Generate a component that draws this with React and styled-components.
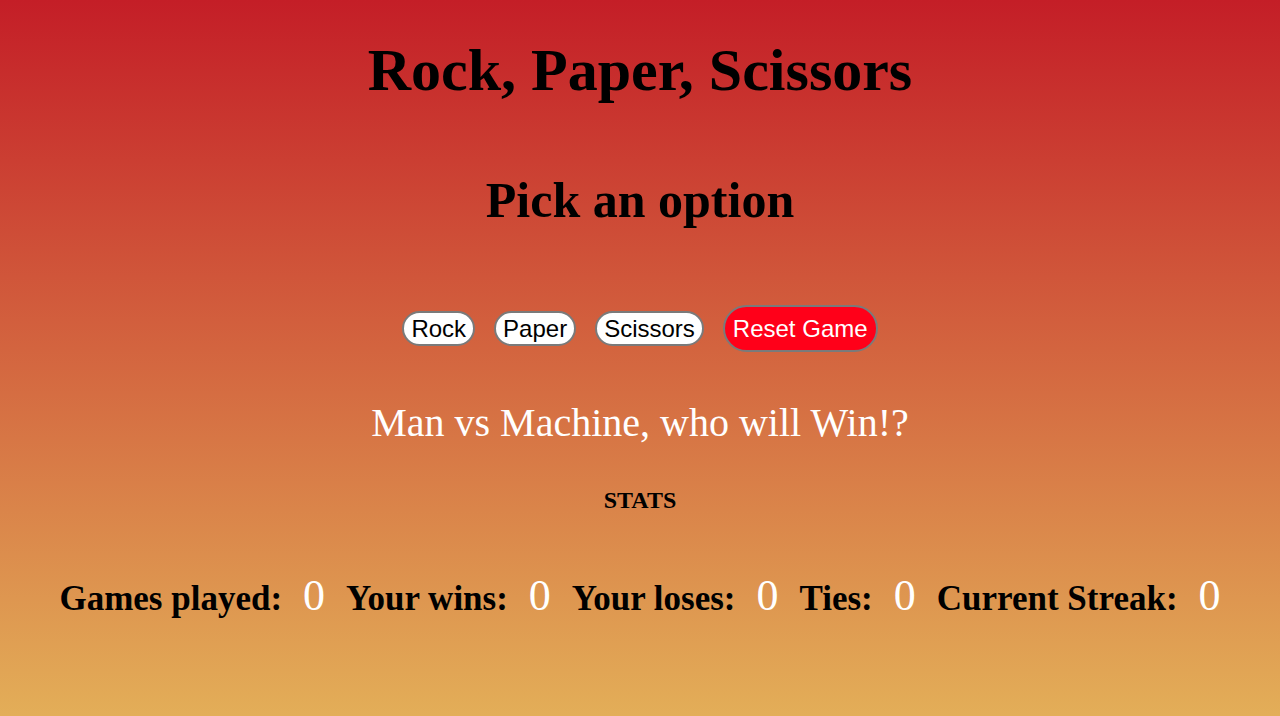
import styled, { createGlobalStyle } from 'styled-components';
import { useState } from 'react';

const GlobalStyle = createGlobalStyle`
  html, body {
    margin: 0;
    padding: 0;
  }
  body {
    font-family: "Liberation Serif", "Times New Roman", serif;
    background: linear-gradient(to bottom, #c41e27 0%, #e3ae58 100%);
    background-attachment: fixed;
    min-height: 100vh;
  }
`;

const OPTIONS = ['Rock', 'Paper', 'Scissors'];

function App() {
  const [stats, setStats] = useState({ played: 0, wins: 0, loses: 0, ties: 0, streak: 0, best: 0 });
  const [message, setMessage] = useState('Man vs Machine, who will Win!?');

  const play = (pick) => {
    const cpu = OPTIONS[Math.floor(Math.random() * 3)];
    const a = OPTIONS.indexOf(pick);
    const b = OPTIONS.indexOf(cpu);
    const next = { ...stats, played: stats.played + 1 };
    if (a === b) {
      next.ties += 1;
      setMessage(`Tie! Both picked ${pick}`);
    } else if ((a + 1) % 3 === b) {
      next.loses += 1;
      next.streak = 0;
      setMessage(`${cpu} beats ${pick}. You lose!`);
    } else {
      next.wins += 1;
      next.streak += 1;
      next.best = Math.max(next.best, next.streak);
      setMessage(`${pick} beats ${cpu}. You win!`);
    }
    setStats(next);
  };

  const reset = () => {
    setStats({ played: 0, wins: 0, loses: 0, ties: 0, streak: 0, best: 0 });
    setMessage('Man vs Machine, who will Win!?');
  };

  const rate = stats.played ? Math.round((stats.wins / stats.played) * 100) : 0;

  return (
    <Page>
      <GlobalStyle />
      <Title>Rock, Paper, Scissors</Title>
      <SubTitle>Pick an option</SubTitle>
      <ButtonRow>
        {OPTIONS.map((o) => (
          <PickButton key={o} onClick={() => play(o)}>{o}</PickButton>
        ))}
        <ResetButton onClick={reset}>Reset Game</ResetButton>
      </ButtonRow>
      <Message>{message}</Message>
      <StatsHeading>STATS</StatsHeading>
      <StatsRow>
        <Stat><Label>Games played:</Label><Value>{stats.played}</Value></Stat>
        <Stat><Label>Your wins:</Label><Value>{stats.wins}</Value></Stat>
        <Stat><Label>Your loses:</Label><Value>{stats.loses}</Value></Stat>
        <Stat><Label>Ties:</Label><Value>{stats.ties}</Value></Stat>
        <Stat><Label>Current Streak:</Label><Value>{stats.streak}</Value></Stat>
      </StatsRow>
      <StatsRow>
        <Stat><Label>Best Streak:</Label><Value>{stats.best}</Value></Stat>
        <Stat><Label>Win Rate:</Label><Value>{rate}%</Value></Stat>
      </StatsRow>
    </Page>
  );
}

export default App;

const Page = styled.div`
  display: flex;
  flex-direction: column;
  align-items: center;
  padding-top: 35px;
  padding-bottom: 40px;
`;

const Title = styled.h1`
  margin: 0;
  font-size: 60px;
  font-weight: bold;
  line-height: 70px;
  color: #000;
`;

const SubTitle = styled.h2`
  margin: 66px 0 0;
  font-size: 50px;
  font-weight: bold;
  line-height: 58px;
  color: #000;
`;

const ButtonRow = styled.div`
  display: flex;
  align-items: center;
  gap: 19px;
  margin-top: 76px;
`;

const PickButton = styled.button`
  font-family: "Liberation Sans", Arial, sans-serif;
  font-size: 24px;
  line-height: 27px;
  padding: 2px 7px;
  background: #fff;
  color: #000;
  border: 2px solid #7a7a7a;
  border-radius: 20px;
  cursor: pointer;
`;

const ResetButton = styled(PickButton)`
  padding: 8px 8px;
  background: #ff0019;
  color: #fff;
  border-radius: 26px;
`;

const Message = styled.p`
  margin: 48px 0 0;
  font-size: 40px;
  line-height: 46px;
  color: #fff;
`;

const StatsHeading = styled.h4`
  margin: 40px 0 0;
  font-size: 24px;
  font-weight: bold;
  line-height: 28px;
  color: #000;
`;

const StatsRow = styled.div`
  display: flex;
  align-items: baseline;
  gap: 21px;
  margin-top: 56px;

  & + & {
    margin-top: 90px;
  }
`;

const Stat = styled.div`
  display: flex;
  align-items: baseline;
  gap: 21px;
`;

const Label = styled.span`
  font-size: 35px;
  font-weight: bold;
  color: #000;
`;

const Value = styled.span`
  font-size: 44px;
  color: #fff;
`;
